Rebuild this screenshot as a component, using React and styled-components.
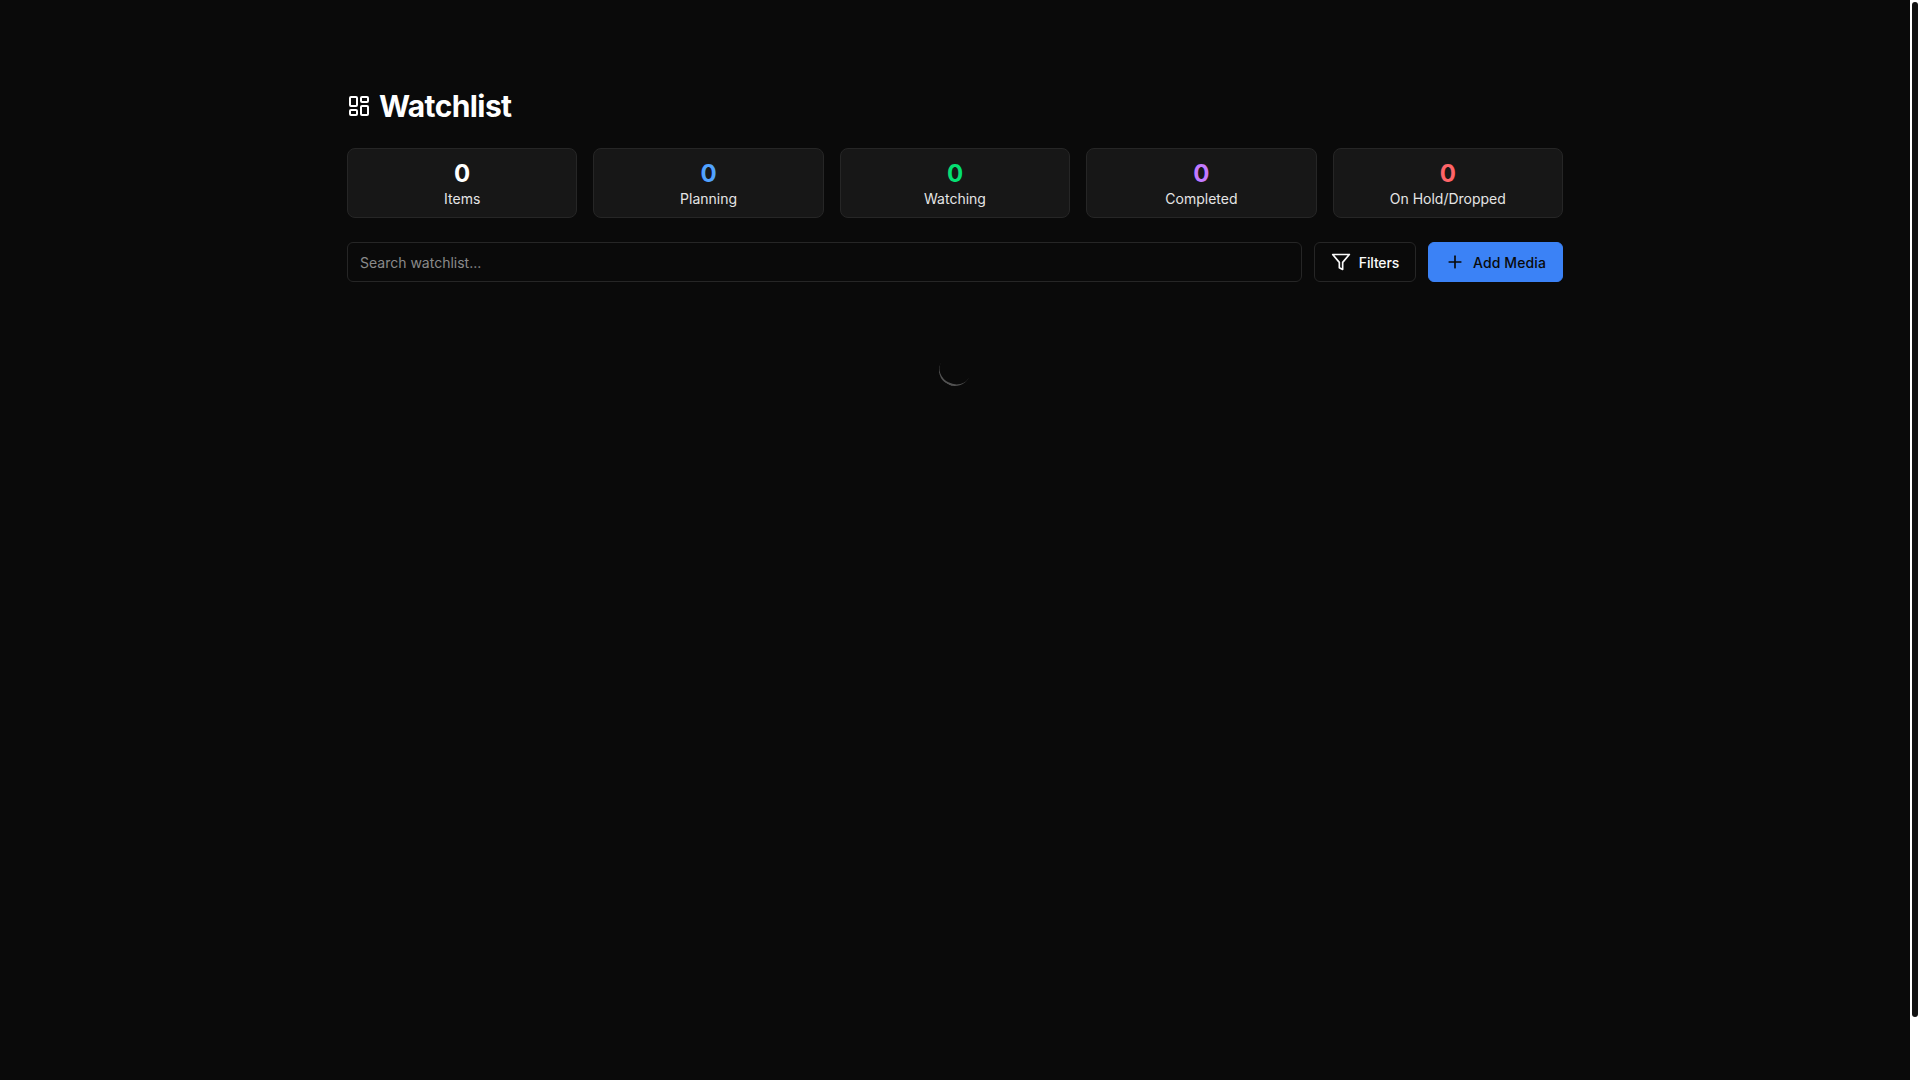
import styled, { createGlobalStyle } from "styled-components";
import { LayoutDashboard, Plus } from "lucide-react";

const GlobalStyle = createGlobalStyle`
  html, body {
    margin: 0;
    background: #0a0a0a;
    font-family: Inter, "Liberation Sans", sans-serif;
  }
  * { box-sizing: border-box; }
`;

const Shell = styled.div`
  display: flex;
  height: 100vh;
  overflow: hidden;
`;

const Page = styled.div`
  flex: 1;
  min-width: 0;
  background: #0a0a0a;
  padding-top: 88px;
`;

const ScrollRail = styled.div`
  flex: none;
  width: 10px;
  padding: 2px;
  background: #fff;
`;

const ScrollThumb = styled.div`
  height: 1015px;
  background: #111;
  border-radius: 3px;
`;

const Container = styled.main`
  width: 1280px;
  margin: 0 auto;
  padding: 0 32px;
`;

const Title = styled.h1`
  display: flex;
  align-items: center;
  gap: 8px;
  margin: 0 0 24px;
  color: #fff;
  font-size: 30px;
  line-height: 36px;
  font-weight: 700;
  letter-spacing: -0.6px;
`;

const Stats = styled.section`
  display: grid;
  grid-template-columns: repeat(5, 1fr);
  gap: 16px;
  margin-bottom: 24px;
`;

const Card = styled.div`
  height: 70px;
  padding: 9px 8px 8px;
  text-align: center;
  background: #171717;
  border: 1px solid #262626;
  border-radius: 8px;
`;

const Count = styled.div`
  color: ${(p) => p.$color};
  font-size: 24px;
  line-height: 32px;
  font-weight: 700;
`;

const Label = styled.div`
  margin-top: -1px;
  color: #e5e5e5;
  font-size: 14px;
  line-height: 20px;
`;

const Toolbar = styled.div`
  display: flex;
  gap: 12px;
`;

const Search = styled.input`
  flex: 1;
  height: 40px;
  padding: 0 12px;
  color: #fff;
  background: #0a0a0a;
  border: 1px solid #262626;
  border-radius: 6px;
  font: 14px Inter, "Liberation Sans", sans-serif;
  outline: none;

  &::placeholder {
    color: #8a8a8a;
    opacity: 1;
  }
`;

const Button = styled.button`
  display: flex;
  align-items: center;
  gap: 8px;
  height: 40px;
  padding: 0 16px;
  color: ${(p) => (p.$primary ? "#0a0a0a" : "#fafafa")};
  background: ${(p) => (p.$primary ? "#3b82f6" : "#0a0a0a")};
  border: 1px solid ${(p) => (p.$primary ? "#3b82f6" : "#262626")};
  border-radius: 6px;
  font: 500 14px Inter, "Liberation Sans", sans-serif;
  letter-spacing: ${(p) => (p.$primary ? "0.1px" : "-0.15px")};
  cursor: pointer;
`;

const Loading = styled.div`
  display: flex;
  justify-content: center;
  padding-top: 72px;
`;

const Spinner = styled.div`
  width: 32px;
  height: 32px;
  border-radius: 50%;
  border-bottom: 2px solid #525252;
  transform: rotate(28deg);
`;

const FilterIcon = () => (
  <svg
    width="20"
    height="20"
    viewBox="0 0 24 24"
    fill="none"
    stroke="currentColor"
    strokeWidth="2"
    strokeLinecap="round"
    strokeLinejoin="round"
  >
    <polygon points="22 3 2 3 10 12.46 10 19 14 21 14 12.46 22 3" />
  </svg>
);

const stats = [
  { label: "Items", color: "#ffffff" },
  { label: "Planning", color: "#51a2ff" },
  { label: "Watching", color: "#05df72" },
  { label: "Completed", color: "#c27aff" },
  { label: "On Hold/Dropped", color: "#ff6467" },
];

export default function App() {
  return (
    <Shell>
      <GlobalStyle />
      <Page>
        <Container>
          <Title>
            <LayoutDashboard size={24} />
            Watchlist
          </Title>
          <Stats>
            {stats.map((s) => (
              <Card key={s.label}>
                <Count $color={s.color}>0</Count>
                <Label>{s.label}</Label>
              </Card>
            ))}
          </Stats>
          <Toolbar>
            <Search placeholder="Search watchlist..." />
            <Button>
              <FilterIcon />
              Filters
            </Button>
            <Button $primary>
              <Plus size={20} />
              Add Media
            </Button>
          </Toolbar>
          <Loading>
            <Spinner />
          </Loading>
        </Container>
      </Page>
      <ScrollRail>
        <ScrollThumb />
      </ScrollRail>
    </Shell>
  );
}
